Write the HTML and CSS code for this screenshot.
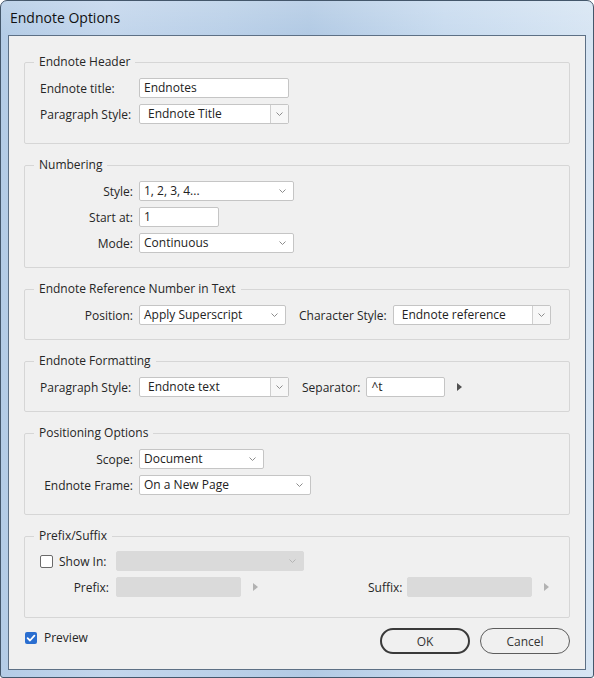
FILE: index.html
```html
<!DOCTYPE html>
<html>
<head>
<meta charset="utf-8">
<title>Endnote Options</title>
<link rel="stylesheet" href="styles.css">
</head>
<body>
<div class="window">
  <div class="titlebar"><span class="title">Endnote Options</span></div>
  <div class="client">

    <fieldset class="group g1">
      <legend>Endnote Header</legend>
      <div class="row">
        <span class="lbl left">Endnote title:</span>
        <div class="field w150">Endnotes</div>
      </div>
      <div class="row">
        <span class="lbl left">Paragraph Style:</span>
        <div class="combo w150"><span class="val">Endnote Title</span><span class="cbtn"><svg class="chev" viewBox="0 0 7 4" width="7" height="4"><path d="M0.5 0.5 L3.5 3.5 L6.5 0.5" fill="none" stroke="#8c8c8c" stroke-width="1"/></svg></span></div>
      </div>
    </fieldset>

    <fieldset class="group g2">
      <legend>Numbering</legend>
      <div class="row">
        <span class="lbl">Style:</span>
        <div class="select w155"><span class="val">1, 2, 3, 4...</span><svg class="chev" viewBox="0 0 7 4" width="7" height="4"><path d="M0.5 0.5 L3.5 3.5 L6.5 0.5" fill="none" stroke="#8c8c8c" stroke-width="1"/></svg></div>
      </div>
      <div class="row">
        <span class="lbl">Start at:</span>
        <div class="field w80">1</div>
      </div>
      <div class="row">
        <span class="lbl">Mode:</span>
        <div class="select w155"><span class="val">Continuous</span><svg class="chev" viewBox="0 0 7 4" width="7" height="4"><path d="M0.5 0.5 L3.5 3.5 L6.5 0.5" fill="none" stroke="#8c8c8c" stroke-width="1"/></svg></div>
      </div>
    </fieldset>

    <fieldset class="group g3">
      <legend>Endnote Reference Number in Text</legend>
      <div class="row">
        <span class="lbl">Position:</span>
        <div class="select w147"><span class="val">Apply Superscript</span><svg class="chev" viewBox="0 0 7 4" width="7" height="4"><path d="M0.5 0.5 L3.5 3.5 L6.5 0.5" fill="none" stroke="#8c8c8c" stroke-width="1"/></svg></div>
        <span class="lbl2 gap13">Character Style:</span>
        <div class="combo w158"><span class="val">Endnote reference</span><span class="cbtn"><svg class="chev" viewBox="0 0 7 4" width="7" height="4"><path d="M0.5 0.5 L3.5 3.5 L6.5 0.5" fill="none" stroke="#8c8c8c" stroke-width="1"/></svg></span></div>
      </div>
    </fieldset>

    <fieldset class="group g4">
      <legend>Endnote Formatting</legend>
      <div class="row">
        <span class="lbl left">Paragraph Style:</span>
        <div class="combo w150"><span class="val">Endnote text</span><span class="cbtn"><svg class="chev" viewBox="0 0 7 4" width="7" height="4"><path d="M0.5 0.5 L3.5 3.5 L6.5 0.5" fill="none" stroke="#8c8c8c" stroke-width="1"/></svg></span></div>
        <span class="lbl2 gap13">Separator:</span>
        <div class="field w79">^t</div>
        <span class="tri"></span>
      </div>
    </fieldset>

    <fieldset class="group g5">
      <legend>Positioning Options</legend>
      <div class="row">
        <span class="lbl">Scope:</span>
        <div class="select w125"><span class="val">Document</span><svg class="chev" viewBox="0 0 7 4" width="7" height="4"><path d="M0.5 0.5 L3.5 3.5 L6.5 0.5" fill="none" stroke="#8c8c8c" stroke-width="1"/></svg></div>
      </div>
      <div class="row">
        <span class="lbl">Endnote Frame:</span>
        <div class="select w172"><span class="val">On a New Page</span><svg class="chev" viewBox="0 0 7 4" width="7" height="4"><path d="M0.5 0.5 L3.5 3.5 L6.5 0.5" fill="none" stroke="#8c8c8c" stroke-width="1"/></svg></div>
      </div>
    </fieldset>

    <fieldset class="group g6">
      <legend>Prefix/Suffix</legend>
      <div class="row">
        <span class="lbls chk-lbl"><span class="checkbox"></span><span>Show In:</span></span>
        <div class="select disabled w188"><span class="val"></span><svg class="chev" viewBox="0 0 7 4" width="7" height="4"><path d="M0.5 0.5 L3.5 3.5 L6.5 0.5" fill="none" stroke="#b4b4b4" stroke-width="1"/></svg></div>
      </div>
      <div class="row">
        <span class="lbls">Prefix:</span>
        <div class="field disabled w125"></div>
        <span class="tri dim"></span>
        <span class="lbl2 suffix">Suffix:</span>
        <div class="field disabled w125 sfx"></div>
        <span class="tri dim"></span>
      </div>
    </fieldset>

    <div class="footer">
      <div class="preview"><span class="checkbox checked"><svg viewBox="0 0 12 12" width="12" height="12"><path d="M2.6 6.2 L5 8.5 L9.4 3.6" fill="none" stroke="#ffffff" stroke-width="1.8" stroke-linecap="round" stroke-linejoin="round"/></svg></span><span>Preview</span></div>
      <div class="buttons">
        <div class="btn ok">OK</div>
        <div class="btn cancel">Cancel</div>
      </div>
    </div>

  </div>
</div>
</body>
</html>
```

FILE: styles.css
```css
* { box-sizing: border-box; }

html, body {
  margin: 0;
  padding: 0;
  background: #ffffff;
}

body {
  font-family: "Segoe UI", "Open Sans", "Noto Sans", sans-serif;
  font-size: 12px;
  color: #262626;
}

.window {
  width: 594px;
  height: 678px;
  border: 1px solid #44576b;
  border-radius: 7px 7px 3px 3px;
  background:
    linear-gradient(to bottom, rgba(255,255,255,0.15) 0px, rgba(255,255,255,0) 34px),
    linear-gradient(to right, #b4cce6 0%, #c3d6ec 18%, #bad0e8 38%, #b2cae4 52%, #c8dbef 75%, #d7e5f3 100%);
  display: flex;
  flex-direction: column;
  overflow: hidden;
}

.titlebar {
  height: 34px;
  flex: none;
  display: flex;
  align-items: center;
  padding-left: 9px;
  padding-bottom: 2px;
}

.title {
  font-size: 14px;
  color: #111;
}

.client {
  margin: 0 7px 7px 7px;
  height: 635px;
  border: 1px solid #5d7085;
  background: #f0f0f0;
  padding: 18px 15px 0 15px;
}

.group {
  margin: 0 0 13px 0;
  padding: 8px 15px 14px 15px;
  border: 1px solid #d6d6d6;
  border-radius: 2px;
  min-width: 0;
}

.group legend {
  padding: 0 5px;
  margin-left: -6px;
  line-height: 16px;
  height: 16px;
  color: #262626;
}

.g1 { padding-bottom: 19px; }
.g5 { padding-bottom: 19px; }
.g6 { padding-top: 7px; padding-bottom: 20px; margin-bottom: 10px; }

.row {
  display: flex;
  align-items: center;
  height: 20px;
  margin-bottom: 6px;
}
.row:last-child { margin-bottom: 0; }

.lbl {
  width: 93px;
  margin-right: 6px;
  text-align: right;
  white-space: nowrap;
  flex: none;
}
.lbl.left { text-align: left; }

.lbls {
  width: 69px;
  margin-right: 7px;
  text-align: right;
  white-space: nowrap;
  flex: none;
}

.chk-lbl {
  display: flex;
  align-items: center;
  text-align: left;
}
.chk-lbl .checkbox { margin-right: 6px; }

.lbl2 {
  margin-right: 6px;
  white-space: nowrap;
  flex: none;
}
.gap13 { margin-left: 13px; }
.suffix { margin-left: 110px; margin-right: 5px; }

.field, .select, .combo {
  height: 20px;
  background: #ffffff;
  border: 1px solid #c5c5c5;
  border-radius: 2px;
  flex: none;
  line-height: 18px;
  color: #222;
  white-space: nowrap;
}

.field { padding-left: 4px; }

.select {
  display: flex;
  align-items: center;
  justify-content: space-between;
  padding: 0 7px 0 4px;
}

.combo {
  display: flex;
  align-items: stretch;
}
.combo .val {
  flex: 1;
  padding-left: 8px;
}
.cbtn {
  width: 18px;
  border-left: 1px solid #cfcfcf;
  background: #f7f7f7;
  display: flex;
  align-items: center;
  justify-content: center;
}

.chev { display: block; flex: none; }

.disabled {
  background: #dadada;
  border-color: #dadada;
}

.w79 { width: 79px; }
.w80 { width: 80px; }
.w125 { width: 125px; }
.w147 { width: 147px; }
.w150 { width: 150px; }
.w155 { width: 155px; }
.w158 { width: 158px; }
.w172 { width: 172px; }
.w188 { width: 188px; }

.tri {
  width: 0;
  height: 0;
  border-top: 4px solid transparent;
  border-bottom: 4px solid transparent;
  border-left: 5px solid #505050;
  margin-left: 12px;
  flex: none;
}
.tri.dim { border-left-color: #b2b2b2; }

.checkbox {
  width: 13px;
  height: 13px;
  border: 1px solid #6a6a6a;
  border-radius: 2px;
  background: #ffffff;
  flex: none;
  display: block;
}
.checkbox.checked {
  width: 12px;
  height: 12px;
  border: none;
  background: #2a6ed0;
}
.checkbox.checked svg { display: block; }

.footer {
  display: flex;
  justify-content: space-between;
  align-items: flex-start;
  height: 26px;
}

.preview {
  display: flex;
  align-items: center;
  margin-top: 3px;
  margin-left: 1px;
  gap: 7px;
  line-height: 14px;
}

.buttons {
  display: flex;
  gap: 10px;
}

.btn {
  width: 90px;
  height: 26px;
  border-radius: 13px;
  display: flex;
  align-items: center;
  justify-content: center;
  color: #333;
  background: #f0f0f0;
}
.btn.ok { border: 2px solid #3a3a3a; }
.btn.cancel { border: 1px solid #5c5c5c; }
```
